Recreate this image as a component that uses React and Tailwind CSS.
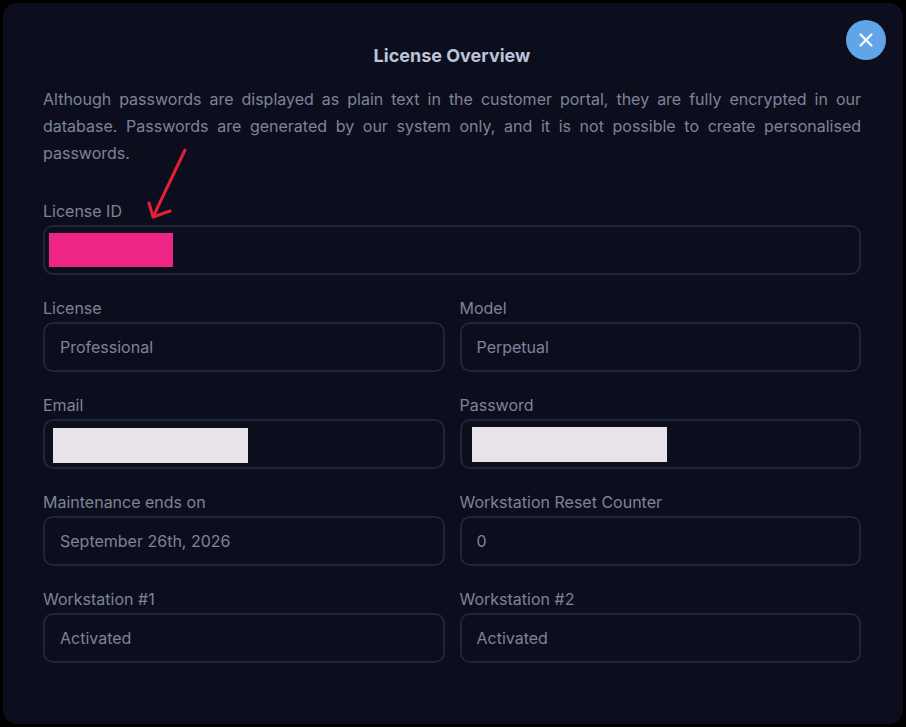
const Field = ({ label, value, children }) => (
  <div className="flex flex-col">
    <label className="text-[16px] leading-[18px] text-[#7d8498] mb-[5px]">{label}</label>
    <div className="relative flex h-[50px] items-center rounded-[10px] border-2 border-[#212538] px-[15px] text-[16px] text-[#7d8498]">
      {value}
      {children}
    </div>
  </div>
);

const App = () => {
  return (
    <div className="h-[727px] w-[906px] bg-black p-[3px] font-['Inter',sans-serif]">
      <div className="relative h-[721px] w-full rounded-[14px] bg-[#0c0e1e] pl-[40px] pr-[42px] pt-[42px]">
        <button className="absolute right-[17px] top-[17px] flex h-10 w-10 items-center justify-center rounded-full bg-[#62a4e8]">
          <svg width="16" height="16" viewBox="0 0 16 16" fill="none" stroke="#ffffff" strokeWidth="2.2" strokeLinecap="round">
            <path d="M2.5 2.5 13.5 13.5M13.5 2.5 2.5 13.5" />
          </svg>
        </button>

        <h2 className="mt-[1px] text-center text-[18px] font-bold leading-5 text-[#bcc3da]">License Overview</h2>

        <p className="mt-[20px] text-justify text-[16px] leading-[27px] text-[#7d8498]">
          Although passwords are displayed as plain text in the customer portal, they are fully encrypted in our
          database. Passwords are generated by our system only, and it is not possible to create personalised
          passwords.
        </p>

        <svg className="absolute left-[142px] top-[145px]" width="50" height="78" viewBox="0 0 50 78" fill="none" stroke="#e21f35" strokeWidth="3" strokeLinecap="round" strokeLinejoin="round">
          <path d="M40 2 8 69M4 55 8 69 25 63" />
        </svg>

        <div className="mt-[35px]">
          <Field label="License ID">
            <div className="absolute left-[4px] top-[6px] h-[34px] w-[124px] bg-[#ee2585]" />
          </Field>
        </div>

        <div className="mt-[24px] grid grid-cols-2 gap-x-[15px] gap-y-[24px]">
          <Field label="License" value="Professional" />
          <Field label="Model" value="Perpetual" />
          <Field label="Email">
            <div className="absolute left-[8px] top-[7px] h-[35px] w-[195px] bg-[#e8e3e8]" />
          </Field>
          <Field label="Password">
            <div className="absolute left-[10px] top-[6px] h-[35px] w-[195px] bg-[#e8e3e8]" />
          </Field>
          <Field label="Maintenance ends on" value="September 26th, 2026" />
          <Field label="Workstation Reset Counter" value="0" />
          <Field label="Workstation #1" value="Activated" />
          <Field label="Workstation #2" value="Activated" />
        </div>
      </div>
    </div>
  );
};

export default App;
